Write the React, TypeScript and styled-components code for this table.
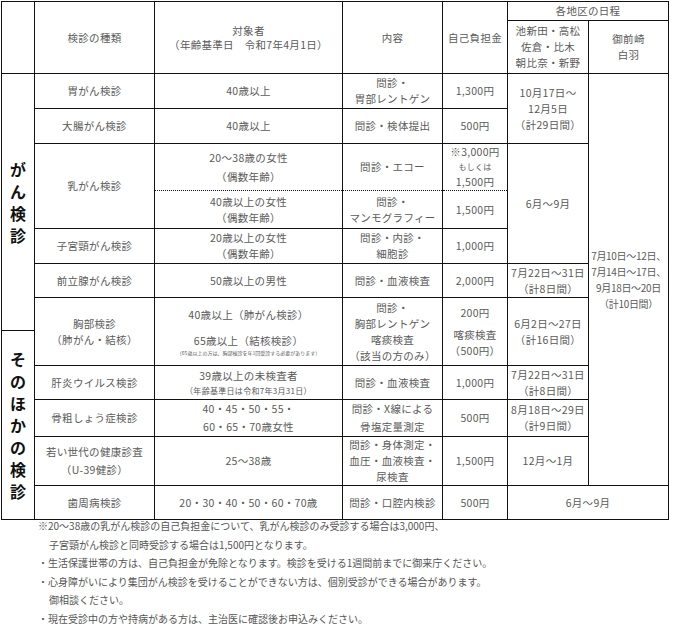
import { createGlobalStyle, styled } from 'styled-components';

const GlobalStyle = createGlobalStyle`
  html, body {
    margin: 0;
    background: #fff;
  }
  body {
    font-family: "Noto Sans CJK JP", "Noto Sans", sans-serif;
    color: #555;
  }
`;

const colWidths = [33, 120, 188, 100, 65, 81, 80];

export default function App() {
  return (
    <Page>
      <GlobalStyle />
      <Table>
        <colgroup>
          {colWidths.map((w, i) => (
            <col key={i} style={{ width: w }} />
          ))}
        </colgroup>
        <tbody>
          <Row $h={19}>
            <Cell rowSpan={2} />
            <Cell rowSpan={2}>検診の種類</Cell>
            <Cell rowSpan={2} $lh={14}>
              <Line>対象者</Line>
              <Line>（年齢基準日　令和7年4月1日）</Line>
            </Cell>
            <Cell rowSpan={2}>内容</Cell>
            <Cell rowSpan={2}>自己負担金</Cell>
            <Cell colSpan={2}>各地区の日程</Cell>
          </Row>
          <Row $h={53}>
            <Cell>
              <Line>池新田・高松</Line>
              <Line>佐倉・比木</Line>
              <Line>朝比奈・新野</Line>
            </Cell>
            <Cell>
              <Line>御前崎</Line>
              <Line>白羽</Line>
            </Cell>
          </Row>

          <Row $h={35}>
            <SideLabel rowSpan={7}>
              {'がん検診'.split('').map((c, i) => (
                <Line key={i}>{c}</Line>
              ))}
            </SideLabel>
            <Cell>胃がん検診</Cell>
            <Cell>40歳以上</Cell>
            <Cell>
              <Line>問診・</Line>
              <Line>胃部レントゲン</Line>
            </Cell>
            <Cell>1,300円</Cell>
            <Cell rowSpan={2}>
              <Line>10月17日～</Line>
              <Line>12月5日</Line>
              <Line>（計29日間）</Line>
            </Cell>
            <Cell rowSpan={11} $tight>
              <Line>7月10日～12日、</Line>
              <Line>7月14日～17日、</Line>
              <Line>9月18日～20日</Line>
              <Line>（計10日間）</Line>
            </Cell>
          </Row>
          <Row $h={35}>
            <Cell>大腸がん検診</Cell>
            <Cell>40歳以上</Cell>
            <Cell>問診・検体提出</Cell>
            <Cell>500円</Cell>
          </Row>
          <Row $h={47}>
            <Cell rowSpan={2}>乳がん検診</Cell>
            <Cell $dotted="bottom" $lh={19}>
              <Line>20～38歳の女性</Line>
              <Line>（偶数年齢）</Line>
            </Cell>
            <Cell $dotted="bottom">問診・エコー</Cell>
            <Cell $dotted="bottom">
              <Line>※3,000円</Line>
              <Line $small>もしくは</Line>
              <Line>1,500円</Line>
            </Cell>
            <Cell rowSpan={3}>6月～9月</Cell>
          </Row>
          <Row $h={38}>
            <Cell $dotted="top">
              <Line>40歳以上の女性</Line>
              <Line>（偶数年齢）</Line>
            </Cell>
            <Cell $dotted="top">
              <Line>問診・</Line>
              <Line>マンモグラフィー</Line>
            </Cell>
            <Cell $dotted="top">1,500円</Cell>
          </Row>
          <Row $h={35}>
            <Cell>子宮頸がん検診</Cell>
            <Cell>
              <Line>20歳以上の女性</Line>
              <Line>（偶数年齢）</Line>
            </Cell>
            <Cell>
              <Line>問診・内診・</Line>
              <Line>細胞診</Line>
            </Cell>
            <Cell>1,000円</Cell>
          </Row>
          <Row $h={34}>
            <Cell>前立腺がん検診</Cell>
            <Cell>50歳以上の男性</Cell>
            <Cell>問診・血液検査</Cell>
            <Cell>2,000円</Cell>
            <Cell>
              <Line>7月22日～31日</Line>
              <Line>（計8日間）</Line>
            </Cell>
          </Row>
          <Row $h={33}>
            <Cell rowSpan={2}>
              <Line>胸部検診</Line>
              <Line>（肺がん・結核）</Line>
            </Cell>
            <Cell rowSpan={2}>
              <Stack $gap={10}>
                <Line>40歳以上（肺がん検診）</Line>
                <div>
                  <Line>65歳以上（結核検診）</Line>
                  <Line $tiny>（65歳以上の方は、胸部検診を年1回受診する必要があります）</Line>
                </div>
              </Stack>
            </Cell>
            <Cell rowSpan={2}>
              <Line>問診・</Line>
              <Line>胸部レントゲン</Line>
              <Line>喀痰検査</Line>
              <Line>（該当の方のみ）</Line>
            </Cell>
            <Cell rowSpan={2}>
              <Stack $gap={6}>
                <Line>200円</Line>
                <div>
                  <Line>喀痰検査</Line>
                  <Line>（500円）</Line>
                </div>
              </Stack>
            </Cell>
            <Cell rowSpan={2}>
              <Line>6月2日～27日</Line>
              <Line>（計16日間）</Line>
            </Cell>
          </Row>
          <Row $h={35}>
            <SideLabel rowSpan={5}>
              {'そのほかの検診'.split('').map((c, i) => (
                <Line key={i}>{c}</Line>
              ))}
            </SideLabel>
          </Row>
          <Row $h={34}>
            <Cell>肝炎ウイルス検診</Cell>
            <Cell>
              <Line>39歳以上の未検査者</Line>
              <Line $small>（年齢基準日は令和7年3月31日）</Line>
            </Cell>
            <Cell>問診・血液検査</Cell>
            <Cell>1,000円</Cell>
            <Cell>
              <Line>7月22日～31日</Line>
              <Line>（計8日間）</Line>
            </Cell>
          </Row>
          <Row $h={35}>
            <Cell>骨粗しょう症検診</Cell>
            <Cell $lh={18}>
              <Line>40・45・50・55・</Line>
              <Line>60・65・70歳女性</Line>
            </Cell>
            <Cell $lh={18}>
              <Line>問診・X線による</Line>
              <Line>骨塩定量測定</Line>
            </Cell>
            <Cell>500円</Cell>
            <Cell>
              <Line>8月18日～29日</Line>
              <Line>（計9日間）</Line>
            </Cell>
          </Row>
          <Row $h={49}>
            <Cell $lh={18}>
              <Line>若い世代の健康診査</Line>
              <Line>（U-39健診）</Line>
            </Cell>
            <Cell>25～38歳</Cell>
            <Cell>
              <Line>問診・身体測定・</Line>
              <Line>血圧・血液検査・</Line>
              <Line>尿検査</Line>
            </Cell>
            <Cell>1,500円</Cell>
            <Cell>12月～1月</Cell>
          </Row>
          <Row $h={34}>
            <Cell>歯周病検診</Cell>
            <Cell>20・30・40・50・60・70歳</Cell>
            <Cell>問診・口腔内検診</Cell>
            <Cell>500円</Cell>
            <Cell colSpan={2}>6月～9月</Cell>
          </Row>
        </tbody>
      </Table>

      <Notes>
        <Note>※20～38歳の乳がん検診の自己負担金について、乳がん検診のみ受診する場合は3,000円、</Note>
        <Note $indent>子宮頸がん検診と同時受診する場合は1,500円となります。</Note>
        <Note>・生活保護世帯の方は、自己負担金が免除となります。検診を受ける1週間前までに御来庁ください。</Note>
        <Note>・心身障がいにより集団がん検診を受けることができない方は、個別受診ができる場合があります。</Note>
        <Note $indent>御相談ください。</Note>
        <Note>・現在受診中の方や持病がある方は、主治医に確認後お申込みください。</Note>
      </Notes>
    </Page>
  );
}

const Page = styled.div`
  padding: 1px 0 0 1px;
  width: 674px;
  box-sizing: border-box;
`;

const Table = styled.table`
  border-collapse: collapse;
  table-layout: fixed;
  width: 668px;
  font-size: 10.5px;
  color: #5a5a5a;
`;

const Row = styled.tr<{ $h: number }>`
  height: ${(p) => p.$h}px;
`;

const Cell = styled.td<{ $dotted?: 'top' | 'bottom'; $lh?: number; $tight?: boolean }>`
  border: 1px solid #111;
  padding: 0 2px;
  text-align: center;
  vertical-align: middle;
  line-height: ${(p) => p.$lh ?? 16}px;
  white-space: nowrap;
  overflow: ${(p) => (p.$tight ? 'visible' : 'hidden')};
  letter-spacing: ${(p) => (p.$tight ? '-0.3px' : '0.3px')};
  ${(p) => (p.$tight ? 'padding: 0; font-size: 10px;' : '')}
  ${(p) => (p.$dotted === 'bottom' ? 'border-bottom: 1px dotted #111;' : '')}
  ${(p) => (p.$dotted === 'top' ? 'border-top: 1px dotted #111;' : '')}
`;

const SideLabel = styled.td`
  border: 1px solid #111;
  padding: 0;
  text-align: center;
  vertical-align: middle;
  font-size: 16px;
  font-weight: 700;
  line-height: 22px;
  color: #111;
`;

const Line = styled.span<{ $small?: boolean; $tiny?: boolean }>`
  display: block;
  ${(p) => (p.$small ? 'font-size: 8px; line-height: 14px;' : '')}
  ${(p) => (p.$tiny ? 'font-size: 5px; line-height: 8px; letter-spacing: 0;' : '')}
`;

const Stack = styled.div<{ $gap: number }>`
  display: flex;
  flex-direction: column;
  gap: ${(p) => p.$gap}px;
`;

const Notes = styled.div`
  margin-top: -3px;
  padding-left: 37px;
  font-size: 10px;
  line-height: 18.6px;
  color: #555;
`;

const Note = styled.div<{ $indent?: boolean }>`
  white-space: nowrap;
  padding-left: ${(p) => (p.$indent ? '11px' : '0')};
`;
